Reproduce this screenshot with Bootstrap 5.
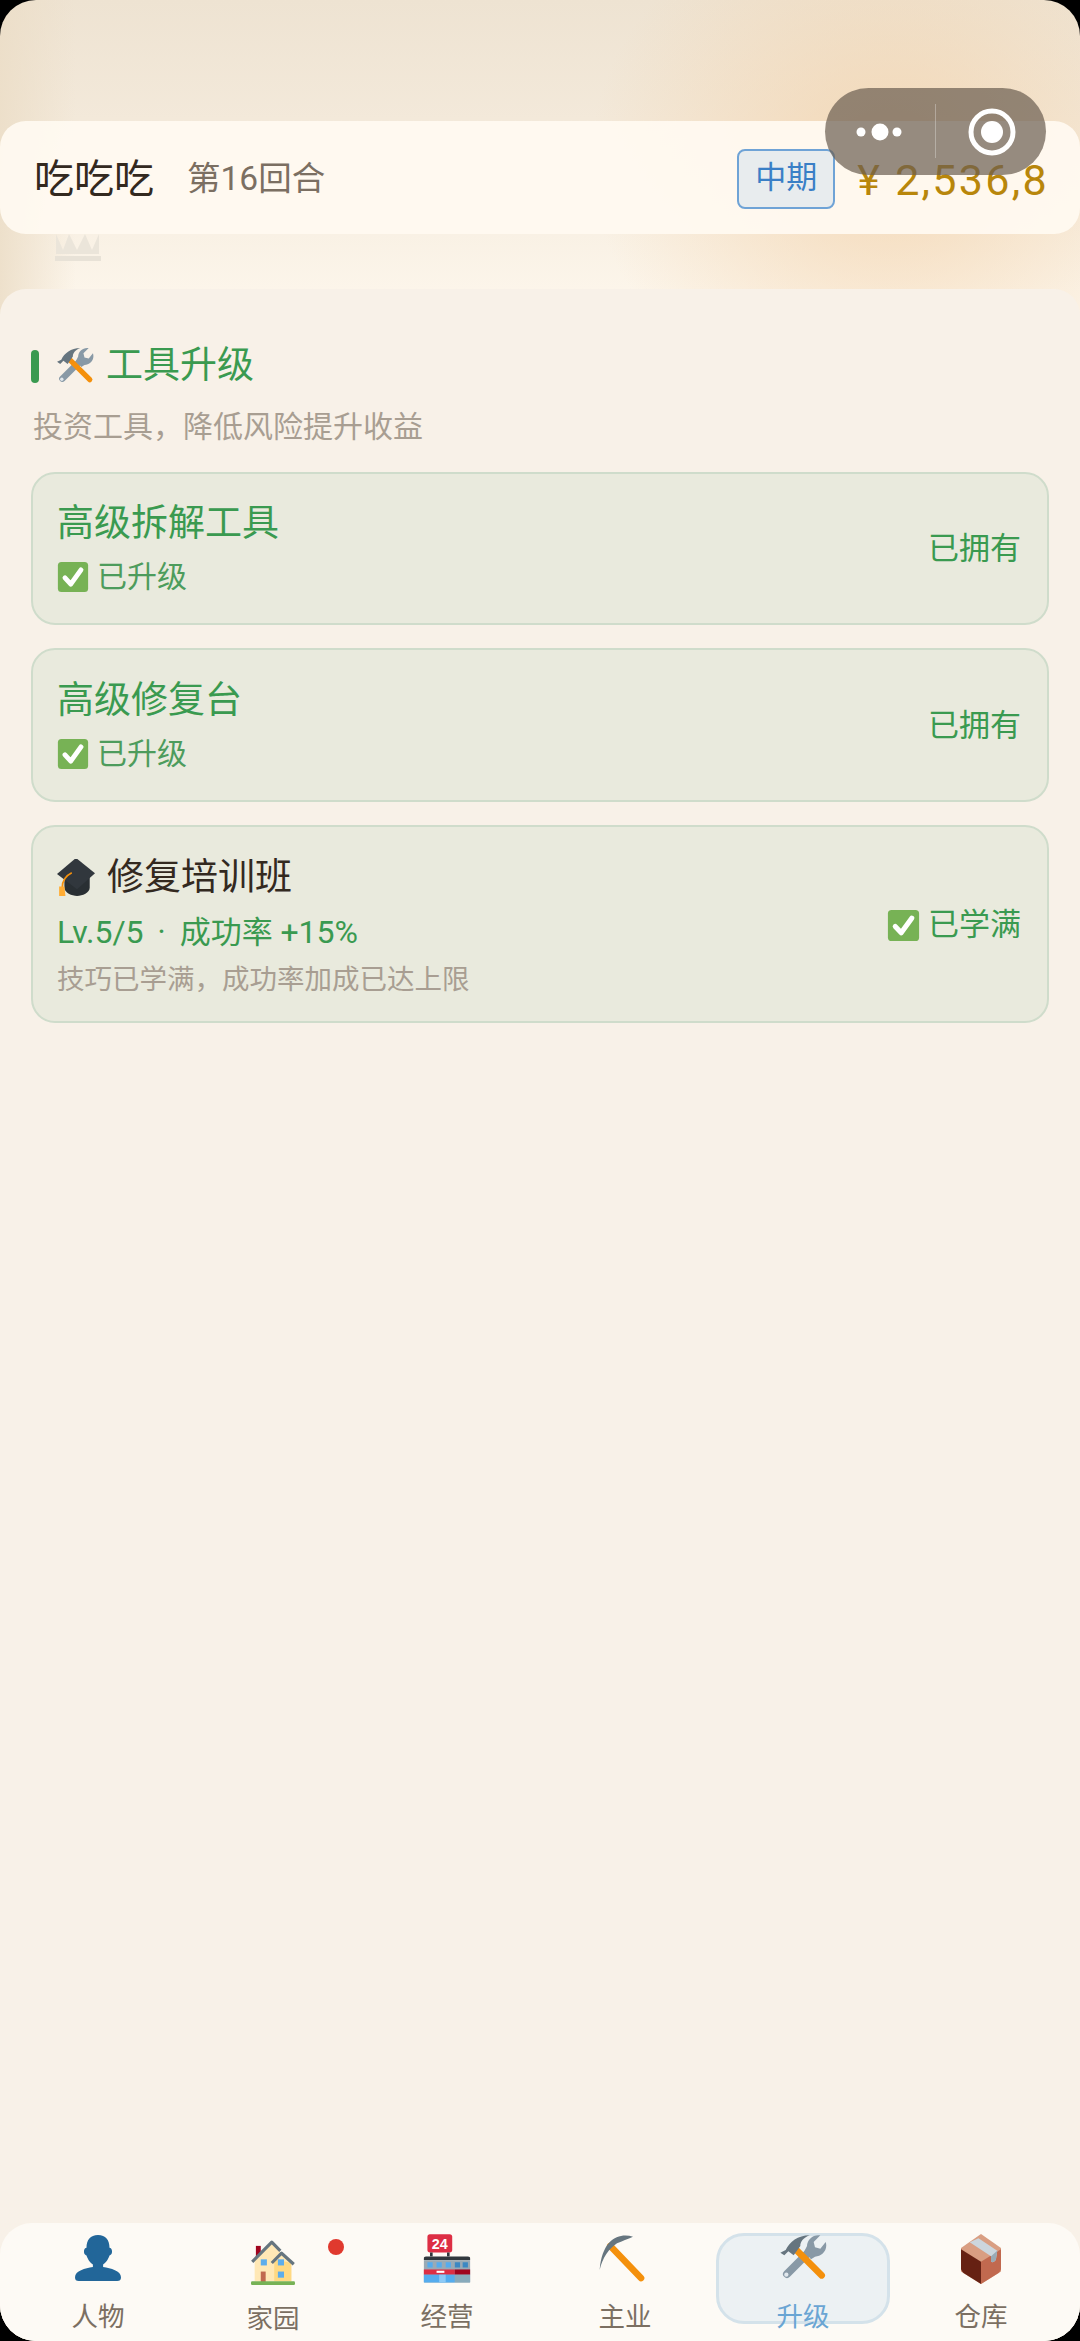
<!DOCTYPE html>
<html>
<head>
  <title>工具升级</title>
  <meta charset="UTF-8">
  <link href="https://cdn.jsdelivr.net/npm/bootstrap@5.3.0/dist/css/bootstrap.min.css" rel="stylesheet">
  <script src="https://cdn.jsdelivr.net/npm/bootstrap@5.3.0/dist/js/bootstrap.bundle.min.js"></script>
  <style>
    html, body { margin: 0; height: 2341px; background: #000; overflow: hidden; }
    body, .phone { font-family: Roboto, "Noto Sans CJK SC", sans-serif; }
    .phone {
      width: 1080px; height: 2341px; border-radius: 36px; overflow: hidden; position: relative;
      background:
        radial-gradient(ellipse 300px 260px at 890px 160px, rgba(243, 210, 170, .75), rgba(243, 210, 170, 0)),
        linear-gradient(to right, rgba(236, 222, 200, .9), rgba(236, 222, 200, 0) 7%),
        linear-gradient(to bottom, #eee3d2, #f3e9da 120px, #fcf5ea 290px);
    }
    .top-gap { height: 121px; }
    .game-head { height: 113px; margin-bottom: 55px; padding: 0 34px; background: rgba(255, 250, 241, .93); border-radius: 26px; position: relative; z-index: 1; }
    .head-left { padding-top: 4px; }
    .save-name { font-size: 40px; color: #33291f; }
    .turn-no { font-size: 33.5px; color: #7b6f62; margin-left: 33px; }
    .stage-tag { width: 98px; height: 60px; margin-top: 2px; font-size: 31px; color: #3a7fc6; background: #e8ecee; border: 2px solid #6fa3d6; border-radius: 8px; }
    .money { font-size: 43px; letter-spacing: 2.3px; color: #b8860b; margin-left: 22px; padding-top: 5px; margin-right: -3px; white-space: nowrap; }
    .crown { position: absolute; left: 55px; top: 234px; }
    .capsule { position: absolute; left: 825px; top: 88px; width: 221px; height: 87px; border-radius: 44px; background: rgba(105, 92, 80, .7); z-index: 2; }
    .capsule-line { position: absolute; left: 110px; top: 16px; width: 1px; height: 54px; background: rgba(255, 255, 255, .3); }
    .capsule svg { position: absolute; left: 0; top: 0; }
    .panel { background: #f8f1e8; border-radius: 26px 26px 0 0; padding: 58px 31px 0; }
    .sec-title { height: 38px; color: #3a9a50; font-size: 37px; }
    .sec-bar { width: 8px; height: 33px; background: #3a9a50; border-radius: 4px; margin-right: 17px; }
    .sec-sub { font-size: 30px; line-height: 40px; color: #a89e92; margin: 22px 0 25px 2px; }
    .tool-row { background: #e9eadd; border: 2px solid #cfdccb; border-radius: 24px; padding: 0 26px 0 24px; margin-bottom: 23px; }
    .row-a { height: 153px; }
    .row-b { height: 154px; }
    .row-c { height: 198px; }
    .tool-name { font-size: 37px; line-height: 44px; color: #3a9a50; padding-top: 2px; }
    .tool-name.dark { color: #33291f; padding-top: 5px; }
    .tool-state { font-size: 30px; line-height: 40px; color: #4d9c5c; margin-top: 11px; }
    .tool-level { font-size: 31px; line-height: 40px; color: #3a9a50; margin-top: 12px; }
    .tool-level b { font-weight: 400; font-size: 32px; }
    .tool-level i { font-style: normal; margin: 0 14px; }
    .tool-note { font-size: 27.5px; line-height: 36px; color: #a89e92; margin-top: 9px; }
    .tool-right { font-size: 31px; color: #3a9a50; padding-top: 2px; }
    .tab-bar { height: 118px; padding: 10px 0 0 10px; background: #fdfaf5; border-radius: 32px 32px 0 0; position: absolute; left: 0; right: 0; bottom: 0; }
    .tab-cell { width: 174px; height: 91px; position: relative; font-size: 26.5px; line-height: 36px; color: #7b6f62; border: 3px solid transparent; border-radius: 28px; }
    .tab-cell:nth-child(1) { width: 176px; }
    .tab-cell:nth-child(4), .tab-cell:nth-child(6) { width: 182px; }
    .tab-cell.on { color: #6aa5d3; background: #ecf1f3; border-color: #d4e2ea; }
    .tab-cell span { position: absolute; left: 0; right: 0; top: 63px; text-align: center; }
    .tab-cell.low span { top: 65px; }
    .tab-cell svg { position: absolute; left: 50%; top: -2px; transform: translateX(-50%); }
    .tab-cell.low svg { top: 4px; }
    .tab-cell:nth-child(4) svg { left: calc(50% - 4px); }
    .red-dot { position: absolute; left: 139px; top: 3px; width: 16px; height: 16px; border-radius: 50%; background: #e0392e; }
  </style>
</head>
<body>

<svg width="0" height="0" class="position-absolute">
  <defs>
    <symbol id="ic-check" viewBox="0 0 36 36">
      <rect x="1" y="1" width="34" height="34" rx="4" fill="#77B255"/>
      <path d="M9 19l6.5 7L27 10" fill="none" stroke="#fff" stroke-width="5.5" stroke-linecap="round" stroke-linejoin="round"/>
    </symbol>
    <symbol id="ic-tools" viewBox="0 0 36 36">
      <path d="M6 30L24 12" stroke="#8899A6" stroke-width="6" stroke-linecap="round"/>
      <path d="M21 9c0-5 5-9 10-8l-5 5 1 4 4 1 4-5c2 6-3 11-8 11l-3 2-5-6z" fill="#8899A6"/>
      <circle cx="5.5" cy="30.5" r="1.6" fill="#E1E8ED"/>
      <path d="M12 11l20 20" stroke="#F4900C" stroke-width="5" stroke-linecap="round"/>
      <path d="M1 14l4-2c3-6 9-11 18-11-5 2-7 5-7 8l-5 7-4-3-3 3-3-2z" fill="#66757F"/>
    </symbol>
    <symbol id="ic-cap" viewBox="0 0 36 36">
      <path d="M7 17h24v10c0 5-7 8-12 8s-12-3-12-8z" fill="#292F33"/>
      <path d="M18 0l18 17-17 18L0 18z" fill="#31373D" transform="translate(0 -1) scale(1 .85)"/>
      <path d="M5 27c0-6 3-11 9-14" fill="none" stroke="#F4900C" stroke-width="1.6"/>
      <path d="M2 26h5l1 9H2z" fill="#FFAC33"/>
    </symbol>
    <symbol id="ic-person" viewBox="0 0 36 36">
      <path d="M18 0c6 0 9 4 9 10 1 0 2 1 2 3s-1 3-2 3c-1 3-3 6-5 7v2c6 1 14 3 14 8 0 2-1 3-3 3H3c-2 0-3-1-3-3 0-5 8-7 14-8v-2c-2-1-4-4-5-7-1 0-2-1-2-3s1-3 2-3c0-6 3-10 9-10z" fill="#226699"/>
    </symbol>
    <symbol id="ic-home" viewBox="0 0 36 36">
      <rect x="4" y="4" width="4" height="9" fill="#A0041E"/>
      <path d="M3 14L17 2l8 8 8 7v16H3z" fill="#FFE8B6"/>
      <path d="M19 15l14 3v15H19z" fill="#FFD983"/>
      <path d="M1 17L17 1l7 7" fill="none" stroke="#66757F" stroke-width="2.6" stroke-linejoin="round"/>
      <path d="M17 18l8-8 10 9" fill="none" stroke="#66757F" stroke-width="2.6" stroke-linejoin="round"/>
      <rect x="8" y="15" width="5" height="5" fill="#5DADEC"/>
      <rect x="22" y="15" width="5" height="5" fill="#5DADEC"/>
      <rect x="22" y="25" width="5" height="5" fill="#5DADEC"/>
      <rect x="8" y="25" width="4" height="9" fill="#C1694F"/>
      <rect x="0" y="33" width="36" height="3" rx="1" fill="#77B255"/>
    </symbol>
    <symbol id="ic-store" viewBox="0 0 36 36">
      <rect x="3" y="-1" width="19" height="14" rx="2" fill="#DD2E44"/>
      <text x="12.5" y="10" text-anchor="middle" font-family="Liberation Sans, sans-serif" font-weight="700" font-size="11" fill="#fff">24</text>
      <rect x="5" y="13" width="2" height="3" fill="#31373D"/>
      <rect x="18" y="13" width="2" height="3" fill="#31373D"/>
      <path d="M0 18a2 2 0 012-2h32a2 2 0 012 2v1H0z" fill="#31373D"/>
      <rect y="19" width="36" height="17" rx="1" fill="#99AAB5"/>
      <g fill="#55ACEE"><rect x="3" y="20.5" width="4" height="4"/><rect x="10" y="20.5" width="4" height="4"/><rect x="17" y="20.5" width="4" height="4"/></g>
      <g fill="#3B88C3"><rect x="24" y="20.5" width="4" height="4"/><rect x="30" y="20.5" width="4" height="4"/></g>
      <rect y="26" width="24" height="4" fill="#DD2E44"/>
      <rect x="24" y="26" width="12" height="4" fill="#A0041E"/>
      <rect x="10" y="27" width="6" height="1.6" fill="#fff"/>
      <rect y="30" width="24" height="6" fill="#55ACEE"/>
      <rect x="12" y="30" width="5" height="6" fill="#8CCAF7"/>
      <rect x="24" y="30" width="12" height="6" fill="#88AABB"/>
    </symbol>
    <symbol id="ic-pick" viewBox="0 0 36 36">
      <path d="M10 9l23 24" stroke="#F4900C" stroke-width="5" stroke-linecap="round"/>
      <path d="M27 2C17-1 4 3 2 27c2-9 7-16 13-20 4-2 8-3 12-5z" fill="#66757F"/>
    </symbol>
    <symbol id="ic-box" viewBox="2 0 32 36" preserveAspectRatio="none">
      <path d="M18 0l16 10v17L18 36 2 27V10z" fill="#D99E82"/>
      <path d="M2 11l16 9v16L4 28c-1-1-2-2-2-3z" fill="#662113"/>
      <path d="M34 11l-16 9v16l14-8c1-1 2-2 2-3z" fill="#C1694F"/>
      <path d="M9 6l7-3 15 9-1 6c0 1-2 3-4 2v-4z" fill="#CCD6DD"/>
      <path d="M26 16l5-4-1 6c0 1-2 3-4 2z" fill="#99AAB5"/>
    </symbol>
  </defs>
</svg>

<div class="phone d-flex flex-column">
  <div class="top-gap"></div>

  <div class="game-head d-flex align-items-center justify-content-between">
    <div class="head-left d-flex align-items-center">
      <span class="save-name">吃吃吃</span>
      <span class="turn-no">第16回合</span>
    </div>
    <div class="d-flex align-items-center">
      <span class="stage-tag d-flex align-items-center justify-content-center">中期</span>
      <span class="money">¥ 2,536,8</span>
    </div>
  </div>

  <svg class="crown" width="46" height="28" viewBox="0 0 46 28">
    <path d="M1 0l7 16 6-16 8 16 8-16 7 16 7-16v20H1z" fill="#ebe5da"/>
    <rect x="0" y="22" width="46" height="5" fill="#e8e2d7"/>
  </svg>

  <div class="capsule">
    <svg width="221" height="87" viewBox="0 0 221 87">
      <circle cx="36" cy="44" r="4.5" fill="#fff"/>
      <circle cx="55" cy="44" r="8.5" fill="#fff"/>
      <circle cx="72" cy="44" r="4.5" fill="#fff"/>
      <circle cx="167" cy="44" r="21" fill="none" stroke="#fff" stroke-width="5"/>
      <circle cx="167" cy="44" r="11" fill="#fff"/>
    </svg>
    <div class="capsule-line"></div>
  </div>

  <div class="panel flex-grow-1">
    <div class="sec-title d-flex align-items-center">
      <i class="sec-bar"></i>
      <svg width="38" height="38" class="me-2"><use href="#ic-tools"/></svg>
      <span class="ms-1">工具升级</span>
    </div>
    <div class="sec-sub">投资工具，降低风险提升收益</div>

    <div class="tool-row row-a d-flex align-items-center justify-content-between">
      <div>
        <div class="tool-name">高级拆解工具</div>
        <div class="tool-state d-flex align-items-center gap-2"><svg width="32" height="32"><use href="#ic-check"/></svg><span>已升级</span></div>
      </div>
      <div class="tool-right">已拥有</div>
    </div>

    <div class="tool-row row-b d-flex align-items-center justify-content-between">
      <div>
        <div class="tool-name">高级修复台</div>
        <div class="tool-state d-flex align-items-center gap-2"><svg width="32" height="32"><use href="#ic-check"/></svg><span>已升级</span></div>
      </div>
      <div class="tool-right">已拥有</div>
    </div>

    <div class="tool-row row-c d-flex align-items-center justify-content-between">
      <div>
        <div class="tool-name dark d-flex align-items-center"><svg width="38" height="38" class="me-2"><use href="#ic-cap"/></svg><span class="ms-1">修复培训班</span></div>
        <div class="tool-level"><b>Lv.5/5</b><i>·</i>成功率 <b>+15%</b></div>
        <div class="tool-note">技巧已学满，成功率加成已达上限</div>
      </div>
      <div class="tool-right d-flex align-items-center gap-2"><svg width="33" height="33"><use href="#ic-check"/></svg><span>已学满</span></div>
    </div>
  </div>

  <div class="tab-bar d-flex">
    <div class="tab-cell"><svg width="46" height="48"><use href="#ic-person"/></svg><span>人物</span></div>
    <div class="tab-cell low"><svg width="44" height="46"><use href="#ic-home"/></svg><i class="red-dot"></i><span>家园</span></div>
    <div class="tab-cell"><svg width="47" height="50"><use href="#ic-store"/></svg><span>经营</span></div>
    <div class="tab-cell"><svg width="48" height="48"><use href="#ic-pick"/></svg><span>主业</span></div>
    <div class="tab-cell on"><svg width="50" height="48"><use href="#ic-tools"/></svg><span>升级</span></div>
    <div class="tab-cell"><svg width="40" height="50"><use href="#ic-box"/></svg><span>仓库</span></div>
  </div>
</div>

</body>
</html>
